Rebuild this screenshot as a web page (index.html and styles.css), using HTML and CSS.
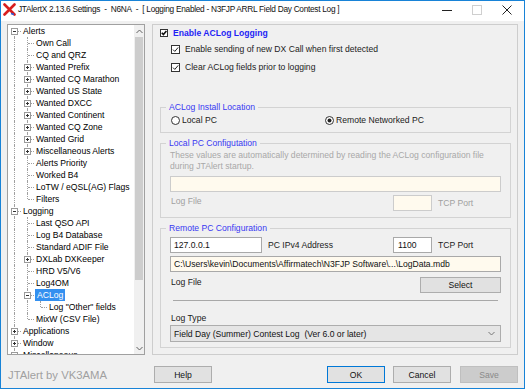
FILE: index.html
```html
<!DOCTYPE html>
<html lang="en">
<head>
    <meta charset="UTF-8">
    <title>JTAlertX Settings</title>
    <link rel="stylesheet" href="styles.css">
</head>
<body>
    <svg class="defs" width="0" height="0">
        <symbol id="plus" viewBox="0 0 7 7">
            <rect x="0.5" y="0.5" width="6" height="6" fill="#fff" stroke="#9a9a9a"/>
            <path d="M2 3.5h3M3.5 2v3" stroke="#333"/>
        </symbol>
        <symbol id="minus" viewBox="0 0 7 7">
            <rect x="0.5" y="0.5" width="6" height="6" fill="#fff" stroke="#9a9a9a"/>
            <path d="M2 3.5h3" stroke="#333"/>
        </symbol>
    </svg>

    <div class="window">
        <div class="titlebar">
            <svg class="app-icon" width="13" height="13" viewBox="0 0 13 13">
                <path d="M1.5 1.5l10 10M11.5 1.5l-10 10" stroke="#d81e1e" stroke-width="2.6" stroke-linecap="round"/>
                <path d="M8 10.5l3 1" stroke="#2a5bd7" stroke-width="1.4"/>
            </svg>
            <span class="title">JTAlertX 2.13.6 Settings&nbsp; - &nbsp;N6NA&nbsp; - &nbsp;[ Logging Enabled - N3FJP ARRL Field Day Contest Log ]</span>
            <div class="caption">
                <svg width="10" height="10"><path d="M0 5.5h10" stroke="#222"/></svg>
                <svg width="10" height="10"><rect x="0.5" y="0.5" width="9" height="9" fill="none" stroke="#cfcfcf"/></svg>
                <svg width="10" height="10"><path d="M0.5 0.5l9 9M9.5 0.5l-9 9" stroke="#222"/></svg>
            </div>
        </div>

        <div class="content">
            <div class="tree">
                <div class="tree-list">
                    <div class="row"><span class="c f"><svg><use href="#minus"/></svg></span><span class="tx">Alerts</span></div>
                    <div class="row"><span class="c v"></span><span class="c t"></span><span class="tx">Own Call</span></div>
                    <div class="row"><span class="c v"></span><span class="c t"></span><span class="tx">CQ and QRZ</span></div>
                    <div class="row"><span class="c v"></span><span class="c t"><svg><use href="#plus"/></svg></span><span class="tx">Wanted Prefix</span></div>
                    <div class="row"><span class="c v"></span><span class="c t"><svg><use href="#plus"/></svg></span><span class="tx">Wanted CQ Marathon</span></div>
                    <div class="row"><span class="c v"></span><span class="c t"><svg><use href="#plus"/></svg></span><span class="tx">Wanted US State</span></div>
                    <div class="row"><span class="c v"></span><span class="c t"><svg><use href="#plus"/></svg></span><span class="tx">Wanted DXCC</span></div>
                    <div class="row"><span class="c v"></span><span class="c t"><svg><use href="#plus"/></svg></span><span class="tx">Wanted Continent</span></div>
                    <div class="row"><span class="c v"></span><span class="c t"><svg><use href="#plus"/></svg></span><span class="tx">Wanted CQ Zone</span></div>
                    <div class="row"><span class="c v"></span><span class="c t"><svg><use href="#plus"/></svg></span><span class="tx">Wanted Grid</span></div>
                    <div class="row"><span class="c v"></span><span class="c t"><svg><use href="#plus"/></svg></span><span class="tx">Miscellaneous Alerts</span></div>
                    <div class="row"><span class="c v"></span><span class="c t"></span><span class="tx">Alerts Priority</span></div>
                    <div class="row"><span class="c v"></span><span class="c t"></span><span class="tx">Worked B4</span></div>
                    <div class="row"><span class="c v"></span><span class="c t"></span><span class="tx">LoTW / eQSL(AG) Flags</span></div>
                    <div class="row"><span class="c v"></span><span class="c l"></span><span class="tx">Filters</span></div>
                    <div class="row"><span class="c t"><svg><use href="#minus"/></svg></span><span class="tx">Logging</span></div>
                    <div class="row"><span class="c v"></span><span class="c t"></span><span class="tx">Last QSO API</span></div>
                    <div class="row"><span class="c v"></span><span class="c t"></span><span class="tx">Log B4 Database</span></div>
                    <div class="row"><span class="c v"></span><span class="c t"></span><span class="tx">Standard ADIF File</span></div>
                    <div class="row"><span class="c v"></span><span class="c t"><svg><use href="#plus"/></svg></span><span class="tx">DXLab DXKeeper</span></div>
                    <div class="row"><span class="c v"></span><span class="c t"></span><span class="tx">HRD V5/V6</span></div>
                    <div class="row"><span class="c v"></span><span class="c t"></span><span class="tx">Log4OM</span></div>
                    <div class="row"><span class="c v"></span><span class="c t"><svg><use href="#minus"/></svg></span><span class="tx sel">ACLog</span></div>
                    <div class="row"><span class="c v"></span><span class="c v"></span><span class="c l"></span><span class="tx">Log "Other" fields</span></div>
                    <div class="row"><span class="c v"></span><span class="c l"></span><span class="tx">MixW (CSV File)</span></div>
                    <div class="row"><span class="c t"><svg><use href="#plus"/></svg></span><span class="tx">Applications</span></div>
                    <div class="row"><span class="c t"><svg><use href="#plus"/></svg></span><span class="tx">Window</span></div>
                    <div class="row"><span class="c l"><svg><use href="#plus"/></svg></span><span class="tx">Miscellaneous</span></div>
                </div>
                <div class="scrollbar">
                    <svg class="arrow" width="7" height="5"><path d="M0.5 4l3-3 3 3" fill="none" stroke="#606060"/></svg>
                    <div class="thumb"></div>
                    <div class="track"></div>
                    <svg class="arrow" width="7" height="5"><path d="M0.5 1l3 3 3-3" fill="none" stroke="#606060"/></svg>
                </div>
            </div>

            <div class="main">
                <div class="check-row main-check">
                    <svg width="8" height="8"><rect x="0.5" y="0.5" width="7" height="7" fill="#fff" stroke="#333"/><path d="M1.8 3.8l1.6 1.8 3-3.6" fill="none" stroke="#111" stroke-width="1.6"/></svg>
                    <span class="main-label">Enable ACLog Logging</span>
                </div>
                <div class="check-row sub-check">
                    <svg width="9" height="9"><rect x="0.5" y="0.5" width="8" height="8" fill="#fff" stroke="#333"/><path d="M2 4.6l1.8 1.8 3.4-4" fill="none" stroke="#222"/></svg>
                    <span>Enable sending of new DX Call when first detected</span>
                </div>
                <div class="check-row sub-check third">
                    <svg width="9" height="9"><rect x="0.5" y="0.5" width="8" height="8" fill="#fff" stroke="#333"/><path d="M2 4.6l1.8 1.8 3.4-4" fill="none" stroke="#222"/></svg>
                    <span>Clear ACLog fields prior to logging</span>
                </div>

                <div class="group install">
                    <span class="group-title">ACLog Install Location</span>
                    <div class="radio-row">
                        <label class="radio local">
                            <svg width="9" height="9"><circle cx="4.5" cy="4.5" r="4" fill="#fff" stroke="#333"/></svg>
                            <span>Local PC</span>
                        </label>
                        <label class="radio">
                            <svg width="9" height="9"><circle cx="4.5" cy="4.5" r="4" fill="#fff" stroke="#333"/><circle cx="4.5" cy="4.5" r="2" fill="#222"/></svg>
                            <span>Remote Networked PC</span>
                        </label>
                    </div>
                </div>

                <div class="group local-pc">
                    <span class="group-title">Local PC Configutation</span>
                    <p class="note">These values are automatically determined by reading the ACLog configuration file<br>during JTAlert startup.</p>
                    <div class="field wide disabled"></div>
                    <div class="field-row">
                        <span class="label muted">Log File</span>
                        <div class="field port disabled"></div>
                        <span class="port-label muted">TCP Port</span>
                    </div>
                </div>

                <div class="group remote-pc">
                    <span class="group-title">Remote PC Configuration</span>
                    <div class="field-row first">
                        <div class="field ip">127.0.0.1</div>
                        <span class="label ip-label">PC IPv4 Address</span>
                        <div class="field port">1100</div>
                        <span class="port-label">TCP Port</span>
                    </div>
                    <div class="field wide path">C:\Users\kevin\Documents\Affirmatech\N3FJP Software\...\LogData.mdb</div>
                    <div class="field-row file-row">
                        <span class="label top">Log File</span>
                        <button class="btn select">Select</button>
                    </div>
                    <div class="separator"></div>
                    <div class="log-type">Log Type</div>
                    <div class="combo">
                        <span>Field Day (Summer) Contest Log&nbsp; (Ver 6.0 or later)</span>
                        <svg width="7" height="5"><path d="M0.5 1l3 3 3-3" fill="none" stroke="#777"/></svg>
                    </div>
                </div>
            </div>
        </div>

        <div class="footer">
            <span class="credit">JTAlert by VK3AMA</span>
            <button class="btn">Help</button>
            <div class="spacer"></div>
            <button class="btn ok">OK</button>
            <button class="btn cancel">Cancel</button>
            <button class="btn save">Save</button>
        </div>
    </div>
</body>
</html>
```

FILE: styles.css
```css
* {
    box-sizing: border-box;
}
body {
    margin: 0;
    font-family: "Liberation Sans", Arial, sans-serif;
    font-size: 8.6px;
    color: #1a1a1a;
    background-color: #f0f0f0;
}
.defs {
    position: absolute;
}
.window {
    width: 525px;
    height: 389px;
    border: 1px solid #1883d7;
    background-color: #f0f0f0;
}
.titlebar {
    height: 20px;
    background-color: #ffffff;
    display: flex;
    align-items: flex-start;
    padding: 1px 0 0 2px;
}
.app-icon {
    margin-top: 1px;
}
.title {
    margin-left: 2px;
    font-size: 8.3px;
    letter-spacing: -0.28px;
    line-height: 14px;
    color: #111;
    white-space: nowrap;
}
.caption {
    margin-left: auto;
    display: flex;
    gap: 20px;
    padding: 3px 12px 0 0;
}
.content {
    display: flex;
    gap: 7px;
    padding: 0 6px;
    margin-top: 3px;
}

/* tree */
.tree {
    width: 138px;
    height: 331px;
    border: 1px solid #a0a0a0;
    background-color: #ffffff;
    display: flex;
    overflow: hidden;
}
.tree-list {
    flex: 1;
    overflow: hidden;
    color: #000;
}
.row {
    display: flex;
    align-items: center;
    height: 12px;
    white-space: nowrap;
}
.c {
    flex: none;
    width: 13px;
    height: 12px;
    position: relative;
}
.v::before, .t::before, .l::before, .f::before {
    content: "";
    position: absolute;
    left: 6px;
    top: 0;
    bottom: 0;
    border-left: 1px dotted #a0a0a0;
}
.l::before {
    bottom: 6px;
}
.f::before {
    top: 6px;
}
.t::after, .l::after, .f::after {
    content: "";
    position: absolute;
    left: 7px;
    width: 6px;
    top: 6px;
    border-top: 1px dotted #a0a0a0;
}
.c svg {
    position: absolute;
    left: 3px;
    top: 3px;
    width: 7px;
    height: 7px;
    z-index: 1;
}
.tx {
    margin-left: 1px;
    padding: 0 1px;
    line-height: 12px;
}
.tx.sel {
    background-color: #3390f0;
    color: #ffffff;
    padding: 0 2px;
}
.scrollbar {
    width: 10px;
    background-color: #f0f0f0;
    display: flex;
    flex-direction: column;
    align-items: center;
    padding: 4px 0 3px;
}
.thumb {
    width: 8px;
    height: 243px;
    margin-top: 3px;
    background-color: #cdcdcd;
}
.track {
    flex: 1;
}

/* main panel */
.main {
    width: 366px;
    height: 331px;
    border: 1px solid #cdcdcd;
    padding: 0 6px 0 7px;
}
.check-row {
    display: flex;
    align-items: center;
    height: 14px;
    margin-top: 1px;
}
.main-label {
    margin-left: 5px;
    font-weight: bold;
    color: #1f1ff5;
}
.sub-check {
    margin-top: 2px;
    padding-left: 11px;
    color: #222;
}
.sub-check span {
    margin-left: 5px;
}
.sub-check.third {
    margin-top: 4px;
}
.group {
    border: 1px solid #d3d3d3;
    padding: 0 9px;
}
.group-title {
    display: block;
    width: max-content;
    margin: -7px 0 0 -4px;
    padding: 0 3px;
    line-height: 12px;
    background-color: #f0f0f0;
    color: #3838f2;
}
.install {
    height: 26px;
    margin-top: 33px;
}
.local-pc {
    height: 75px;
    margin-top: 10px;
}
.remote-pc {
    height: 120px;
    margin-top: 10px;
}
.radio-row {
    display: flex;
    height: 12px;
    margin-top: 1px;
    padding-left: 1px;
    color: #222;
}
.radio {
    display: flex;
    align-items: center;
    gap: 2px;
}
.radio.local {
    width: 154px;
}
.note {
    margin: 1px 0 0;
    line-height: 11px;
    color: #a8a8a8;
}
.field {
    height: 16px;
    border: 1px solid #a9a9a9;
    background-color: #ffffff;
    padding: 0 3px;
    line-height: 14px;
    color: #111;
    white-space: nowrap;
    overflow: hidden;
}
.field.wide {
    width: 100%;
    margin-top: 4px;
    background-color: #fffaee;
}
.field.disabled {
    border-color: #cccccc;
    background-color: #fffaee;
}
.field.path {
    margin-top: 3px;
}
.field-row {
    display: flex;
    align-items: center;
    height: 16px;
    margin-top: 3px;
}
.field-row.first {
    margin-top: 3px;
}
.label {
    flex: 1;
    padding-left: 1px;
    align-self: flex-start;
    line-height: 12px;
}
.label.top {
    line-height: 10px;
}
.muted {
    color: #a0a0a0;
}
.field.ip {
    width: 92px;
}
.label.ip-label {
    flex: 1;
    margin-left: 5px;
    align-self: center;
}
.field.port {
    width: 39px;
    padding: 0 4px;
}
.port-label {
    width: 63px;
    margin-left: 6px;
}
.file-row {
    margin-top: 5px;
}
.btn {
    height: 17px;
    width: 58px;
    padding: 0;
    border: 1px solid #adadad;
    background-color: #e1e1e1;
    font-family: inherit;
    font-size: 8.6px;
    color: #111;
}
.btn.select {
    width: 81px;
    height: 16px;
}
.separator {
    margin: 7px 3px 0;
    border-top: 1px solid #a8a8a8;
}
.log-type {
    margin-top: 11px;
    padding-left: 1px;
    line-height: 12px;
}
.combo {
    margin-top: 1px;
    height: 17px;
    border: 1px solid #adadad;
    background-color: #e5e5e5;
    display: flex;
    align-items: center;
    justify-content: space-between;
    padding: 0 5px 0 3px;
    color: #111;
}

/* footer */
.footer {
    display: flex;
    align-items: center;
    padding: 11px 6px 0 7px;
}
.credit {
    width: 146px;
    font-size: 11.3px;
    color: #a0a0a0;
}
.spacer {
    flex: 1;
}
.btn.ok {
    border-color: #0078d7;
}
.btn.cancel {
    margin-left: 8px;
}
.btn.save {
    margin-left: 9px;
    background-color: #cccccc;
    border-color: #bfbfbf;
    color: #8a8a8a;
}
```
